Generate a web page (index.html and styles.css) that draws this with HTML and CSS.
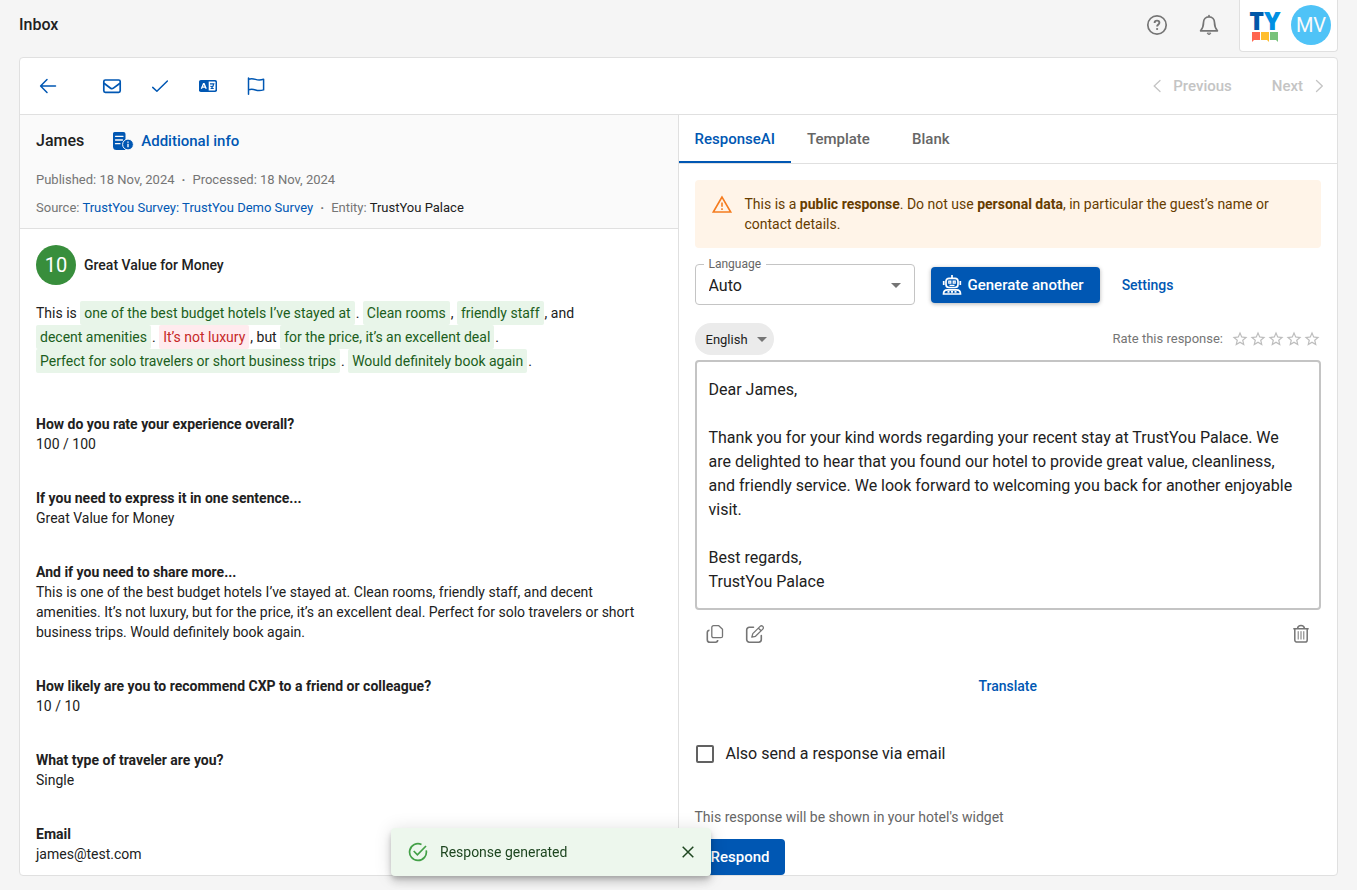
FILE: index.html
```html
<!DOCTYPE html>
<html lang="en">
<head>
  <meta charset="UTF-8">
  <meta name="viewport" content="width=device-width, initial-scale=1.0">
  <title>Inbox</title>
  <link rel="stylesheet" href="styles.css">
</head>
<body>
  <header class="topbar">
    <h1 class="page-title">Inbox</h1>
    <div class="topbar-actions">
      <button class="icon-btn grey" aria-label="Help">
        <svg width="24" height="24" viewBox="0 0 24 24" fill="none" stroke="currentColor" stroke-width="1.7">
          <circle cx="12" cy="12" r="9.2"/>
          <path d="M9.6 9.9c0-1.4 1-2.3 2.4-2.3s2.4.9 2.4 2.1c0 1.7-2.3 1.8-2.3 3.8" stroke-width="1.9"/>
          <circle cx="12.1" cy="16" r="1.1" fill="currentColor" stroke="none"/>
        </svg>
      </button>
      <button class="icon-btn grey" aria-label="Notifications">
        <svg width="24" height="24" viewBox="0 0 24 24" fill="none" stroke="currentColor" stroke-width="1.7" stroke-linejoin="round" stroke-linecap="round">
          <path d="M12 3.9c-3.500 0-5.500 2.500-5.500 5.700 0 4.400-1.300 6.400-2.900 8.200h16.800c-1.600-1.800-2.900-3.800-2.900-8.200 0-3.200-2-5.700-5.500-5.700zM12 2.600v1.300"/>
          <path d="M10.200 20.400a1.900 1.700 0 0 0 3.600 0z" fill="currentColor" stroke-width=".8"/>
        </svg>
      </button>
      <div class="account">
        <div class="logo">
          <div class="logo-text"><span class="logo-t">T</span><span class="logo-y">Y</span></div>
          <svg width="26" height="10" viewBox="0 0 26 10">
            <path d="M0 0h8v8H2L0 10z" fill="#ff6650"/>
            <path d="M9 0h8v10l-2-2H9z" fill="#ffbe2e"/>
            <path d="M18 0h8v10l-2-2h-6z" fill="#78c27a"/>
          </svg>
        </div>
        <div class="avatar">MV</div>
      </div>
    </div>
  </header>

  <main class="card">
    <div class="toolbar">
      <div class="toolbar-left">
        <button class="icon-btn back" aria-label="Back">
          <svg width="24" height="24" viewBox="0 0 24 24" fill="none" stroke="currentColor" stroke-width="1.5" stroke-linecap="round" stroke-linejoin="round">
            <path d="M19.500 12H4.800M11 5.500L4.600 12l6.400 6.500"/>
          </svg>
        </button>
        <button class="icon-btn" aria-label="Mark as unread">
          <svg width="24" height="24" viewBox="0 0 24 24" fill="none" stroke="currentColor" stroke-width="1.700" stroke-linejoin="round">
            <rect x="3.800" y="6" width="16.400" height="12.300" rx="1.500"/>
            <path d="M4 9.200l6.600 5a2.300 2.300 0 0 0 2.800 0l6.600-5"/>
          </svg>
        </button>
        <button class="icon-btn" aria-label="Mark as done">
          <svg width="24" height="24" viewBox="0 0 24 24" fill="none" stroke="currentColor" stroke-width="1.500" stroke-linecap="round" stroke-linejoin="round">
            <path d="M4.700 13.400l4.200 3.900L19.400 7"/>
          </svg>
        </button>
        <button class="icon-btn" aria-label="Translate review">
          <svg width="24" height="24" viewBox="0 0 24 24">
            <rect x="3" y="6" width="18" height="12" rx="1.800" fill="currentColor"/>
            <path d="M12.700 7.500h6a.8.8 0 0 1 .8.8v7.400a.8.8 0 0 1-.8.8h-6z" fill="#fff"/>
            <path d="M5.400 14.700l2.100-5h.6l2.100 5M6.200 13.200h3.200" stroke="#fff" stroke-width="1.300" fill="none"/>
            <path d="M14 9.800h3.800c-.2 2-1.200 3.500-3.200 4.700M14.500 12l3.200 2.500" stroke="currentColor" stroke-width="1.300" fill="none"/>
          </svg>
        </button>
        <button class="icon-btn" aria-label="Flag">
          <svg width="24" height="24" viewBox="0 0 24 24" fill="none" stroke="currentColor" stroke-width="1.500" stroke-linecap="round" stroke-linejoin="round">
            <path d="M4.500 4v16.300M4.500 5.300c2.500-.9 4.800-.6 7 .1 2.700.9 5.300.8 8.100-.1v10.600c-2.800.9-5.400 1-8.100.1-2.200-.7-4.500-1-7-.1"/>
          </svg>
        </button>
      </div>
      <div class="pager">
        <button class="pager-btn" disabled>
          <svg width="20" height="20" viewBox="0 0 20 20" fill="none" stroke="currentColor" stroke-width="1.300" stroke-linecap="round"><path d="M13 4.500L7.200 10l5.800 5.500"/></svg>
          Previous
        </button>
        <button class="pager-btn" disabled>
          Next
          <svg width="20" height="20" viewBox="0 0 20 20" fill="none" stroke="currentColor" stroke-width="1.300" stroke-linecap="round"><path d="M7.500 4.500l5.800 5.500-5.800 5.500"/></svg>
        </button>
      </div>
    </div>

    <div class="columns">
      <section class="review">
        <div class="review-head">
          <div class="review-title">
            <h2 class="guest">James</h2>
            <button class="link-btn">
              <svg width="22" height="20" viewBox="0 0 22 20">
                <path d="M2.500 1h9a2 2 0 0 1 2 2v16h-9a3.500 3.500 0 0 1-3.500-3.500V2.500A1.500 1.500 0 0 1 2.500 1z" fill="currentColor"/>
                <path d="M3.500 5.300h7.500M3.500 9h7M3.500 12.700h4.500" stroke="#fafafa" stroke-width="1.300" stroke-linecap="round"/>
                <circle cx="16" cy="13.500" r="5.400" fill="currentColor" stroke="#fafafa" stroke-width="1"/>
                <path d="M16 12.800v3.400M16 10.500v1.200" stroke="#fafafa" stroke-width="1.400"/>
              </svg>
              Additional info
            </button>
          </div>
          <p class="meta"><span>Published: 18 Nov, 2024</span><span class="dot">·</span><span>Processed: 18 Nov, 2024</span></p>
          <p class="meta"><span>Source: <a href="#">TrustYou Survey: TrustYou Demo Survey</a></span><span class="dot">·</span><span>Entity: <b class="entity">TrustYou Palace</b></span></p>
        </div>
        <div class="review-body">
          <div class="score-row">
            <span class="score">10</span>
            <h3 class="review-name">Great Value for Money</h3>
          </div>
          <p class="highlighted">This is <mark class="pos">one of the best budget hotels I’ve stayed at</mark>. <mark class="pos">Clean rooms</mark>, <mark class="pos">friendly staff</mark>, and <mark class="pos">decent amenities</mark>. <mark class="neg">It’s not luxury</mark>, but <mark class="pos">for the price, it’s an excellent deal</mark>. <mark class="pos">Perfect for solo travelers or short business trips</mark>. <mark class="pos">Would definitely book again</mark>.</p>
          <dl class="answers">
            <div class="answer">
              <dt>How do you rate your experience overall?</dt>
              <dd>100 / 100</dd>
            </div>
            <div class="answer">
              <dt>If you need to express it in one sentence...</dt>
              <dd>Great Value for Money</dd>
            </div>
            <div class="answer">
              <dt>And if you need to share more...</dt>
              <dd>This is one of the best budget hotels I’ve stayed at. Clean rooms, friendly staff, and decent amenities. It’s not luxury, but for the price, it’s an excellent deal. Perfect for solo travelers or short business trips. Would definitely book again.</dd>
            </div>
            <div class="answer">
              <dt>How likely are you to recommend CXP to a friend or colleague?</dt>
              <dd>10 / 10</dd>
            </div>
            <div class="answer">
              <dt>What type of traveler are you?</dt>
              <dd>Single</dd>
            </div>
            <div class="answer">
              <dt>Email</dt>
              <dd>james@test.com</dd>
            </div>
          </dl>
        </div>
      </section>

      <section class="response">
        <div class="tabs" role="tablist">
          <button class="tab active" role="tab" aria-selected="true">ResponseAI</button>
          <button class="tab" role="tab" aria-selected="false">Template</button>
          <button class="tab" role="tab" aria-selected="false">Blank</button>
        </div>
        <div class="response-body">
          <div class="alert">
            <svg width="22" height="22" viewBox="0 0 22 22" fill="none" stroke="#f57c1f" stroke-width="1.600">
              <path d="M11 3L2.300 18h17.400z"/>
              <path d="M11 8.500v4.200M11 14.300v1.700"/>
            </svg>
            <p class="alert-text">This is a <strong>public response</strong>. Do not use <strong>personal data</strong>, in particular the guest’s name or contact details.</p>
          </div>

          <div class="generate-row">
            <div class="field">
              <label class="field-label" for="language">Language</label>
              <select class="field-select" id="language">
                <option>Auto</option>
              </select>
              <svg class="caret" width="10" height="5" viewBox="0 0 10 5"><path d="M0 0h10L5 5z" fill="currentColor"/></svg>
            </div>
            <button class="btn btn-generate">
              <svg width="20" height="20" viewBox="0 0 20 20" fill="none" stroke="currentColor" stroke-width="1.700">
                <path d="M10 0v3.500M1.700 6v4M18.300 6v4"/>
                <rect x="4" y="3.300" width="12" height="9.200" rx="3"/>
                <path d="M6.800 6.200h2v2h-2zM11.200 6.200h2v2h-2zM7.500 10.300h5" stroke-width="1.200"/>
                <path d="M1.500 19c0-3 1.600-4.200 4-4.200h9c2.400 0 4 1.200 4 4.200z"/>
                <path d="M5.500 16.800h9" stroke-dasharray="2 1.500"/>
              </svg>
              Generate another
            </button>
            <button class="text-btn">Settings</button>
          </div>

          <div class="rate-row">
            <div class="chip">
              <select class="chip-select" aria-label="Response language">
                <option>English</option>
              </select>
              <svg class="caret" width="10" height="5" viewBox="0 0 10 5"><path d="M0 0h10L5 5z" fill="currentColor"/></svg>
            </div>
            <div class="rating">
              <span class="rating-label">Rate this response:</span>
              <div class="stars" id="stars"></div>
            </div>
          </div>

          <textarea class="reply" rows="9" aria-label="Response">Dear James,

Thank you for your kind words regarding your recent stay at TrustYou Palace. We are delighted to hear that you found our hotel to provide great value, cleanliness, and friendly service. We look forward to welcoming you back for another enjoyable visit.

Best regards,
TrustYou Palace</textarea>

          <div class="reply-tools">
            <button class="icon-btn grey" aria-label="Copy">
              <svg width="20" height="20" viewBox="0 0 20 20" fill="none" stroke="currentColor" stroke-width="1.300" stroke-linejoin="round">
                <path d="M8.500 1.700h5.300l3.700 3.500v7a1.500 1.500 0 0 1-1.500 1.500H8.500A1.700 1.700 0 0 1 6.800 12V3.400a1.700 1.700 0 0 1 1.700-1.700z"/>
                <path d="M4.500 6.200A2.200 2.200 0 0 0 2.300 8.400v7.300a2.600 2.600 0 0 0 2.600 2.600h5.600a2.200 2.200 0 0 0 2.200-2.200" stroke-width="1.600"/>
              </svg>
            </button>
            <button class="icon-btn grey" aria-label="Edit">
              <svg width="20" height="20" viewBox="0 0 20 20" fill="none" stroke="currentColor" stroke-width="1.600" stroke-linejoin="round" stroke-linecap="round">
                <path d="M8.500 3.300H4.300a2.600 2.600 0 0 0-2.600 2.600v9.700a2.600 2.600 0 0 0 2.600 2.600h9.400a2.600 2.600 0 0 0 2.600-2.600v-4"/>
                <path d="M6.800 13.200l1-3.600 7.300-7.200a1.900 1.900 0 0 1 2.700 2.700l-7.300 7.200zM13.500 4.200l2.600 2.600" stroke-width="1.300"/>
              </svg>
            </button>
            <button class="icon-btn grey delete" aria-label="Delete">
              <svg width="20" height="20" viewBox="0 0 20 20" fill="none" stroke="currentColor" stroke-width="1.500" stroke-linejoin="round">
                <path d="M2.300 4.700h15.400M3.800 5v10.900a2.200 2.200 0 0 0 2.200 2.200h8a2.200 2.200 0 0 0 2.200-2.200V5M6.500 4.500c.3-1.900 1.300-2.900 3.500-2.900s3.200 1 3.500 2.900"/>
                <path d="M7.200 7.200v8.300M10 7.200v8.300M12.800 7.200v8.300" stroke-width="1"/>
              </svg>
            </button>
          </div>

          <button class="text-btn translate">Translate</button>

          <label class="email-check">
            <input type="checkbox" class="checkbox">
            Also send a response via email
          </label>

          <p class="widget-note">This response will be shown in your hotel's widget</p>
          <button class="btn btn-respond">Respond</button>
        </div>
      </section>
    </div>
  </main>

  <div class="toast" role="status">
    <svg width="20" height="20" viewBox="0 0 20 20" fill="none" stroke="#43a047" stroke-width="1.700">
      <path d="M18.200 8.300a8.400 8.400 0 1 1-4.700-5.900"/>
      <path d="M5.700 9l3.700 3.800L18 4"/>
    </svg>
    <span class="toast-text">Response generated</span>
    <button class="toast-close" aria-label="Close">
      <svg width="12" height="12" viewBox="0 0 12 12" stroke="currentColor" stroke-width="1.500"><path d="M.7.7l10.600 10.600M11.300.7L.7 11.300"/></svg>
    </button>
  </div>

  <script>
    const stars = document.getElementById('stars');

    // Five empty stars
    for (let i = 1; i <= 5; i++) {
      const star = document.createElement('button');
      star.className = 'star';
      star.setAttribute('aria-label', `${i} star`);
      star.innerHTML = `<svg width="18" height="18" viewBox="0 0 24 24" fill="currentColor">
        <path d="M22 9.240l-7.190-.620L12 2 9.190 8.630 2 9.240l5.460 4.730L5.820 21 12 17.270 18.180 21l-1.630-7.030L22 9.240zM12 15.400l-3.760 2.270 1-4.280-3.320-2.880 4.380-.380L12 6.100l1.710 4.040 4.380.380-3.320 2.880 1 4.280L12 15.400z"/>
      </svg>`;
      stars.appendChild(star);
    }
  </script>
</body>
</html>
```
FILE: styles.css
```css
* {
  box-sizing: border-box;
}

body {
  margin: 0;
  height: 100vh;
  padding: 0 19px 14px;
  display: flex;
  flex-direction: column;
  overflow: hidden;
  background-color: #f5f5f5;
  color: #212121;
  font-family: Roboto, sans-serif;
  font-size: 14px;
  line-height: 20px;
}

h1, h2, h3, p, dl, dd {
  margin: 0;
}

button, select, textarea {
  font-family: inherit;
  color: inherit;
}

button {
  display: inline-flex;
  align-items: center;
  padding: 0;
  border: none;
  background: none;
  cursor: pointer;
}

a {
  color: #0057b3;
  text-decoration: none;
}

/* Top bar */
.topbar {
  display: flex;
  justify-content: space-between;
  height: 57px;
  flex-shrink: 0;
}

.page-title {
  font-size: 16px;
  font-weight: 500;
  line-height: 50px;
}

.topbar-actions {
  display: flex;
  align-items: flex-start;
}

.topbar-actions .icon-btn {
  margin: 13px 28px 0 0;
}

.topbar-actions .icon-btn:nth-child(2) {
  margin-right: 18px;
}

.icon-btn {
  color: #0057b3;
}

.icon-btn.grey {
  color: #757575;
}

.account {
  display: flex;
  align-items: center;
  gap: 10px;
  height: 52px;
  padding: 0 6px 2px 9px;
  background-color: #fff;
  border: 1px solid #e0e0e0;
  border-top: none;
  border-radius: 0 0 4px 4px;
}

.logo {
  display: flex;
  flex-direction: column;
  align-items: center;
  width: 32px;
}

.logo-text {
  font-family: "Open Sans", sans-serif;
  font-size: 25px;
  font-weight: 800;
  line-height: 24px;
}

.logo-t {
  color: #0057a8;
}

.logo-y {
  color: #0090e3;
}

.avatar {
  width: 40px;
  height: 40px;
  border-radius: 50%;
  background-color: #4fc3f7;
  color: #fafafa;
  font-size: 20px;
  line-height: 40px;
  text-align: center;
}

/* Main card */
.card {
  flex: 1;
  min-height: 0;
  display: flex;
  flex-direction: column;
  background-color: #fff;
  border: 1px solid #e0e0e0;
  border-radius: 4px;
  overflow: hidden;
}

.toolbar {
  display: flex;
  justify-content: space-between;
  align-items: center;
  height: 57px;
  flex-shrink: 0;
  padding: 0 8px 0 16px;
  border-bottom: 1px solid #e0e0e0;
}

.toolbar-left {
  display: flex;
  gap: 24px;
}

.back {
  margin-right: 16px;
}

.pager {
  display: flex;
  gap: 40px;
}

.pager-btn {
  gap: 6px;
  color: #c4c4c4;
  font-size: 15px;
  font-weight: 500;
}

.pager-btn:disabled {
  cursor: default;
}

.columns {
  flex: 1;
  min-height: 0;
  display: grid;
  grid-template-columns: 1fr 1fr;
}

/* Review column */
.review {
  border-right: 1px solid #e0e0e0;
  overflow: hidden;
}

.review-head {
  padding: 14px 16px 10px;
  background-color: #fafafa;
  border-bottom: 1px solid #e0e0e0;
}

.review-title {
  display: flex;
  align-items: center;
  gap: 28px;
  height: 24px;
  margin-bottom: 17px;
}

.guest {
  font-size: 16px;
  font-weight: 500;
}

.link-btn {
  gap: 7px;
  color: #0057b3;
  font-size: 15px;
  font-weight: 500;
}

.meta {
  color: #757575;
  font-size: 13px;
  line-height: 20px;
}

.meta + .meta {
  margin-top: 8px;
}

.dot {
  margin: 0 7px;
  font-weight: 700;
}

.entity {
  color: #212121;
  font-weight: 400;
}

.review-body {
  padding: 16px;
}

.score-row {
  display: flex;
  align-items: center;
  gap: 8px;
}

.score {
  width: 40px;
  height: 40px;
  border-radius: 50%;
  background-color: #388e3c;
  color: #fff;
  font-size: 20px;
  line-height: 40px;
  text-align: center;
}

.review-name {
  font-size: 14px;
  font-weight: 500;
}

.highlighted {
  margin-top: 16px;
  line-height: 24px;
}

mark {
  display: inline-block;
  padding: 0 4px;
  margin: 0 1px 0 0;
  border-radius: 2px;
}

.pos {
  background-color: #e8f5e9;
  color: #1b5e20;
}

.neg {
  background-color: #ffebee;
  color: #c62828;
}

.answers {
  display: flex;
  flex-direction: column;
  gap: 34px;
  margin-top: 41px;
  padding-right: 8px;
}

dt {
  font-weight: 700;
}

/* Response column */
.response {
  min-width: 0;
  overflow: hidden;
}

.tabs {
  display: flex;
  height: 49px;
  border-bottom: 1px solid #e0e0e0;
}

.tab {
  justify-content: center;
  min-width: 90px;
  padding: 2px 16px 0;
  border-bottom: 2px solid transparent;
  color: #666;
  font-size: 15px;
  font-weight: 500;
}

.tab.active {
  color: #0057b3;
  border-bottom-color: #0057b3;
}

.response-body {
  display: flex;
  flex-direction: column;
  align-items: flex-start;
  padding: 16px;
}

.alert {
  display: flex;
  gap: 12px;
  width: 100%;
  padding: 14px 16px;
  border-radius: 4px;
  background-color: #fff4e8;
  color: #663c00;
}

.alert svg {
  flex-shrink: 0;
}

.generate-row {
  display: flex;
  align-items: center;
  margin-top: 16px;
}

.field {
  position: relative;
  width: 220px;
  margin-right: 16px;
}

.field-label {
  position: absolute;
  top: -8px;
  left: 9px;
  padding: 0 5px;
  background-color: #fff;
  color: #666;
  font-size: 12px;
  line-height: 16px;
}

.field-select {
  display: block;
  width: 100%;
  height: 41px;
  padding: 2px 32px 0 13px;
  appearance: none;
  background-color: transparent;
  border: 1px solid #c4c4c4;
  border-radius: 4px;
  font-size: 16px;
}

.caret {
  position: absolute;
  top: 50%;
  right: 14px;
  margin-top: -2px;
  color: #757575;
  pointer-events: none;
}

.btn {
  height: 36px;
  border-radius: 4px;
  background-color: #0057b3;
  color: #fff;
  font-size: 15px;
  font-weight: 500;
}

.btn-generate {
  gap: 6px;
  padding: 0 16px 0 11px;
  box-shadow: 0 1px 4px rgba(0, 0, 0, 0.3);
}

.text-btn {
  color: #0057b3;
  font-size: 14px;
  font-weight: 500;
}

.generate-row .text-btn {
  margin-left: 22px;
}

.rate-row {
  display: flex;
  justify-content: space-between;
  align-items: center;
  width: 100%;
  margin: 18px 0 5px;
}

.chip {
  position: relative;
}

.chip .caret {
  right: 7px;
}

.chip-select {
  display: block;
  height: 32px;
  padding: 0 25px 0 11px;
  appearance: none;
  border: none;
  border-radius: 16px;
  background-color: #ebebeb;
  font-size: 13px;
}

.rating {
  display: flex;
  align-items: center;
  gap: 8px;
}

.rating-label {
  color: #757575;
  font-size: 13px;
}

.stars {
  display: flex;
}

.star {
  color: #bdbdbd;
}

.reply {
  display: block;
  width: 100%;
  padding: 16px 20px 14px 12px;
  border: 2px solid #c4c4c4;
  border-radius: 4px;
  resize: none;
  overflow: hidden;
  font-size: 16px;
  line-height: 24px;
}

.reply-tools {
  display: flex;
  gap: 20px;
  width: 100%;
  padding: 14px 10px;
}

.delete {
  margin-left: auto;
}

.translate {
  align-self: center;
  height: 20px;
  margin-top: 18px;
}

.email-check {
  display: flex;
  align-items: center;
  gap: 11px;
  margin-top: 46px;
  font-size: 16px;
  line-height: 24px;
}

.checkbox {
  appearance: none;
  width: 18px;
  height: 18px;
  margin: 0 1px;
  border: 2px solid #616161;
  border-radius: 2px;
}

.checkbox:checked {
  background-color: #0057b3;
  border-color: #0057b3;
}

.widget-note {
  margin-top: 41px;
  color: #666;
}

.btn-respond {
  margin-top: 12px;
  padding: 0 16px;
}

/* Toast */
.toast {
  position: fixed;
  left: 391px;
  bottom: 14px;
  display: flex;
  align-items: center;
  gap: 12px;
  width: 320px;
  height: 48px;
  padding: 0 17px;
  border-radius: 4px;
  background-color: #edf7ed;
  color: #1e4620;
  box-shadow: 0 3px 5px -1px rgba(0, 0, 0, 0.2), 0 6px 10px rgba(0, 0, 0, 0.14), 0 1px 18px rgba(0, 0, 0, 0.12);
}

.toast-close {
  margin-left: auto;
}
```
